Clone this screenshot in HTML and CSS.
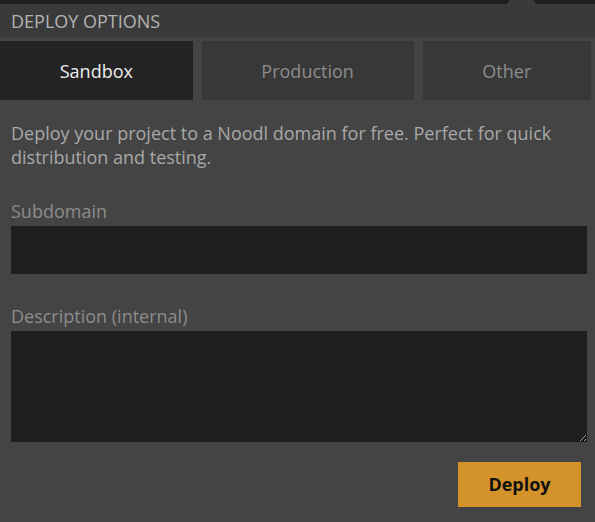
FILE: index.html
```html
<!DOCTYPE html>
<html lang="en">
<head>
<meta charset="utf-8">
<title>Deploy options</title>
<link rel="stylesheet" href="styles.css">
</head>
<body>
<div class="popup">
  <div class="topbar"><span class="notch"></span></div>
  <div class="header">DEPLOY OPTIONS</div>
  <div class="tabs">
    <div class="tab active">Sandbox</div>
    <div class="tab">Production</div>
    <div class="tab">Other</div>
  </div>
  <div class="content">
    <p class="intro">Deploy your project to a Noodl domain for free. Perfect for quick distribution and testing.</p>
    <label class="label" for="sub">Subdomain</label>
    <input class="field" id="sub" type="text">
    <label class="label label-desc" for="desc">Description (internal)</label>
    <textarea class="area" id="desc"></textarea>
    <div class="actions">
      <button class="deploy" type="button">Deploy</button>
    </div>
  </div>
</div>
</body>
</html>
```

FILE: styles.css
```css
html, body {
  margin: 0;
  padding: 0;
  background: #444444;
  font-family: "Open Sans", "Noto Sans", sans-serif;
}

.popup {
  width: 595px;
  height: 522px;
  background: #444444;
  overflow: hidden;
}

.topbar {
  position: relative;
  height: 4px;
  background: #1f1f1f;
  overflow: hidden;
}

.notch {
  position: absolute;
  left: 507px;
  top: -19px;
  width: 29px;
  height: 23px;
  background: #3a3a3a;
  clip-path: polygon(50% 0, 100% 100%, 0 100%);
}

.header {
  height: 33px;
  display: flex;
  align-items: center;
  padding-left: 11px;
  background: #3a3a3a;
  color: #b4b4b4;
  font-size: 18px;
  text-transform: uppercase;
}

.tabs {
  display: flex;
  gap: 9px;
  margin-top: 4px;
  padding-right: 4px;
  height: 59px;
}

.tab {
  flex: 1 1 auto;
  display: flex;
  align-items: center;
  justify-content: center;
  background: #383838;
  color: #8c8c8c;
  font-size: 18px;
}

.tab.active {
  background: #232323;
  color: #ededed;
}

.content {
  display: flex;
  flex-direction: column;
  padding: 0 8px 0 11px;
}

.intro {
  margin: 21px 0 0;
  font-size: 18px;
  line-height: 24px;
  color: #a8a8a8;
}

.label {
  display: block;
  margin-top: 30px;
  font-size: 18px;
  line-height: 24px;
  color: #8c8c8c;
}

.field, .area {
  display: block;
  box-sizing: border-box;
  width: 576px;
  margin: 3px 0 0;
  border: none;
  background: #1f1f1f;
  color: #dddddd;
  font-family: inherit;
  font-size: 16px;
  outline: none;
}

.field {
  height: 48px;
  padding: 0 10px;
}

.area {
  height: 111px;
  padding: 8px 10px;
  resize: vertical;
}

.actions {
  display: flex;
  justify-content: flex-end;
  margin-top: 20px;
  padding-right: 6px;
}

.deploy {
  width: 123px;
  height: 45px;
  padding: 0 0 1px;
  border: none;
  background: #d4922a;
  color: #111111;
  font-family: inherit;
  font-size: 18px;
  font-weight: 700;
  cursor: pointer;
}
```
